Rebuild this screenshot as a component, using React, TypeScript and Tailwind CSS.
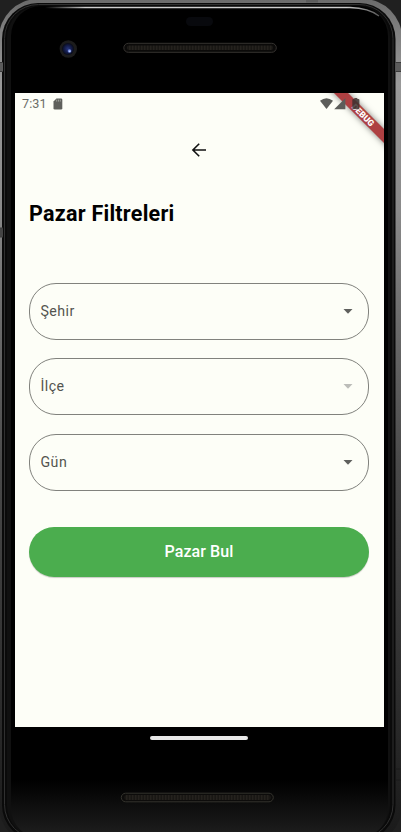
import React from 'react';

function PhoneBody() {
  return (
    <svg className="absolute inset-0" width="401" height="832" viewBox="0 0 401 832" aria-hidden="true">
      <defs>
        <linearGradient id="metal" x1="0" y1="0" x2="0" y2="1">
          <stop offset="0" stopColor="#6a6a6a" />
          <stop offset="0.03" stopColor="#7c7c7c" />
          <stop offset="0.1" stopColor="#9a9a9a" />
          <stop offset="0.25" stopColor="#8a8a8a" />
          <stop offset="0.38" stopColor="#6c6c6c" />
          <stop offset="0.55" stopColor="#4a4a4a" />
          <stop offset="0.8" stopColor="#303030" />
          <stop offset="1" stopColor="#191919" />
        </linearGradient>
        <linearGradient id="glass" x1="0" y1="0" x2="0" y2="1">
          <stop offset="0" stopColor="#000" />
          <stop offset="0.93" stopColor="#000" />
          <stop offset="1" stopColor="#1f1f1f" />
        </linearGradient>
        <linearGradient id="shine" gradientUnits="userSpaceOnUse" x1="45" y1="0" x2="380" y2="0">
          <stop offset="0" stopColor="#ccc" stopOpacity="0" />
          <stop offset="0.12" stopColor="#ccc" />
          <stop offset="0.9" stopColor="#ccc" />
          <stop offset="1" stopColor="#aaa" stopOpacity="0.5" />
        </linearGradient>
        <pattern id="mesh" width="3" height="4" patternUnits="userSpaceOnUse">
          <rect width="3" height="4" fill="#191714" />
          <rect width="1.4" height="4" fill="#25221e" />
        </pattern>
        <radialGradient id="lens">
          <stop offset="0" stopColor="#26347c" />
          <stop offset="0.6" stopColor="#131b47" />
          <stop offset="1" stopColor="#090b16" />
        </radialGradient>
      </defs>
      <rect width="401" height="832" fill="#202020" />
      <rect x="-1" y="-1" width="403" height="846" rx="39" fill="url(#metal)" />
      <rect x="2" y="3" width="393.5" height="838" rx="36" fill="#0a0a0a" />
      <rect x="4.5" y="4.500" width="388.500" height="834" rx="34" fill="none" stroke="#303030" />
      <rect x="7" y="6" width="383" height="832" rx="32" fill="#101010" />
      <rect x="11" y="6" width="377" height="832" rx="30" fill="url(#glass)" />
      <path d="M45 7.500H350Q369 8 379 16" fill="none" stroke="url(#shine)" strokeWidth="1.3" />
      <path d="M0 62.500h3v9H0zM395.500 62.500h5.500v9h-5.500zM306 0h12v2.500h-12z" fill="#5c5c5c" />
      <path d="M0 228h3v9H0z" fill="#444" />
      <path d="M0 62.500h3M0 71.500h3M395.500 62.500h5.500M395.500 71.500h5.500M0 228h3M0 237h3" stroke="#3a3a3a" />
      <path d="M395.500 769h5M395.500 780h5" stroke="#1b1b1b" />
      <rect x="186" y="17" width="27" height="9" rx="4.500" fill="#08090d" />
      <circle cx="68.300" cy="49" r="8.700" fill="#1c1c1c" />
      <circle cx="68" cy="49" r="6" fill="url(#lens)" />
      <circle cx="69.500" cy="51" r="1.800" fill="#7189dc" />
      <circle cx="69.700" cy="51.200" r="0.800" fill="#c8d6ff" />
      <rect x="123.800" y="43.300" width="152.500" height="9" rx="4.500" fill="#0b0a09" stroke="#35322f" />
      <rect x="127" y="45.500" width="146" height="4.500" rx="2" fill="url(#mesh)" />
      <rect x="121.300" y="793.200" width="152" height="8.600" rx="4.300" fill="#0d0c0b" stroke="#34332d" />
      <rect x="124.500" y="795" width="146" height="5" rx="2" fill="url(#mesh)" />
    </svg>
  );
}

function DebugRibbon() {
  return (
    <div className="absolute right-0 top-0 h-[80px] w-[80px] overflow-hidden">
      <div className="absolute left-[8.5px] top-[16.5px] flex h-[10px] w-[110px] -translate-x-[5px] rotate-45 items-center justify-center bg-[#ae4042] font-[Roboto,sans-serif] text-[8.6px] font-black leading-none text-white shadow-[0_0_6px_rgba(0,0,0,0.5)]">
        DEBUG
      </div>
    </div>
  );
}

function StatusBar() {
  return (
    <div className="relative z-10 flex h-[21px] items-center pl-[7px] pr-[24px] text-[#6b6c67]">
      <span className="w-[24px] pt-[2px] text-[12.6px] leading-none tracking-[0.1px]">7:31</span>
      <svg className="ml-[7px]" width="10" height="12" viewBox="0 0 10 12">
        <path d="M3.400.5H8q1.300 0 1.300 1.300v8.400q0 1.300-1.300 1.300H1.800Q.5 11.500.5 10.200V3.500z" fill="#5f605c" />
        <path d="M3.700 1.600v2M5.500 1.600v2M7.300 1.600v2" stroke="#b5b6b0" strokeWidth=".7" />
      </svg>
      <svg className="ml-auto" width="13" height="12" viewBox="0 0 13 12">
        <path d="M0 2.800Q6.500-2.200 13 2.800L6.500 11z" fill="#5c5d5a" />
      </svg>
      <svg className="ml-[1px]" width="12" height="12" viewBox="0 0 12 12">
        <path d="M11.400 0v11.300H.2z" fill="#5c5d5a" />
      </svg>
      <svg className="ml-[6px]" width="8" height="12" viewBox="0 0 8 12">
        <path d="M2.300 0h3v1h1.200q.9 0 .9.900v8.500q0 .900-.9.900H1.200q-.9 0-.9-.900V1.900q0-.900.9-.900h1.100z" fill="#3b302f" fillOpacity=".85" />
      </svg>
    </div>
  );
}

function SelectField({ label, disabled = false }: { label: string; disabled?: boolean }) {
  return (
    <button
      type="button"
      disabled={disabled}
      className="flex h-[57px] w-full items-center justify-between rounded-[27px] border border-[#81827d] pl-[10.5px] pr-[15.5px] text-left text-[14.2px] tracking-[0.45px] text-[#53544f]"
    >
      <span>{label}</span>
      <svg width="10" height="5" viewBox="0 0 10 5">
        <path d="M.500 0h9L5 4.700z" fill={disabled ? '#bcbdb9' : '#5f605d'} />
      </svg>
    </button>
  );
}

export default function App() {
  return (
    <div className="relative h-[832px] w-[401px] overflow-hidden bg-[#202020] pt-[93px] font-[Roboto,sans-serif]">
      <PhoneBody />
      <main className="relative ml-[15px] h-[634px] w-[369px] overflow-hidden bg-[#fdfef7]">
        <DebugRibbon />
        <StatusBar />
        <div className="flex h-[72px] items-center justify-center pr-[1px]">
          <svg width="16" height="16" viewBox="0 0 16 16" fill="none" stroke="#111" strokeWidth="1.6">
            <path d="M15 8H2M8.200 1.700L1.900 8l6.300 6.300" />
          </svg>
        </div>
        <div className="pl-[14px] pr-[15px]">
          <h1 className="mt-[12px] text-[21.5px] font-bold leading-[32px] tracking-[0.25px] text-black">Pazar Filtreleri</h1>
          <form className="mt-[53px] flex flex-col">
            <div className="flex flex-col gap-[18.4px]">
              <SelectField label="Şehir" />
              <SelectField label="İlçe" disabled />
              <SelectField label="Gün" />
            </div>
            <button type="button" className="mt-[36.2px] h-[50px] w-full rounded-full bg-[#4bad4e] text-[16px] font-medium tracking-[0.1px] text-white shadow-[0_1px_1px_rgba(0,0,0,0.2)]">
              Pazar Bul
            </button>
          </form>
        </div>
      </main>
      <div className="relative ml-[150px] mt-[9px] h-[4px] w-[98px] rounded-full bg-[#e8e8e8]" />
    </div>
  );
}
